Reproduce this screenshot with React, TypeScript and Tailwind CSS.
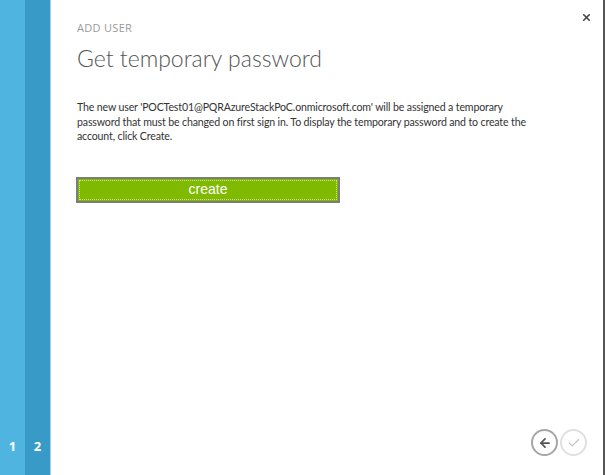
import {X, ArrowLeft, Check} from "lucide-react";

export default function App() {
    return (
        <div className="flex w-[605px] h-[475px] bg-white font-['Lato',sans-serif] overflow-hidden">
            {/* step rail */}
            <div className="flex h-full">
                <div className="w-[25px] h-full bg-[#4fb5e0] flex flex-col justify-end items-center pb-[22px]">
                    <span className="text-white font-bold text-[13px] leading-none font-['Open_Sans',sans-serif]">1</span>
                </div>
                <div className="w-[25px] h-full bg-[#389ac6] flex flex-col justify-end items-center pb-[22px]">
                    <span className="text-white font-bold text-[13px] leading-none font-['Open_Sans',sans-serif]">2</span>
                </div>
                <div className="w-[1px] h-full bg-[#9ed2ec]"></div>
            </div>

            {/* main panel */}
            <div className="flex-1 flex flex-col h-full border-r-2 border-[#555]">
                <div className="flex justify-end pt-[12px] pr-[11px]">
                    <X size={11} strokeWidth={3.5} className="text-[#444]" />
                </div>
                <div className="pl-[26px] flex flex-col">
                    <div className="text-[11px] text-[#9a9a9a] leading-none tracking-[0.3px] mt-[-1px] font-['Open_Sans',sans-serif]">ADD USER</div>
                    <h1 className="text-[23px] font-light text-[#555] leading-none mt-[14px]">
                        Get temporary password
                    </h1>
                    <p className="text-[10.6px] text-[#333] leading-[14.5px] mt-[30px] tracking-[-0.15px]">
                        The new user 'POCTest01@PQRAzureStackPoC.onmicrosoft.com' will be assigned a temporary<br/>
                        password that must be changed on first sign in. To display the temporary password and to create the<br/>
                        account, click Create.
                    </p>
                    <button className="mt-[33px] ml-[-1px] w-[264px] h-[26px] bg-[#7fba00] border-2 border-[#7c7c7c] text-white text-[14px] font-['Liberation_Sans',sans-serif] outline outline-1 outline-dotted outline-[#c8e68a] outline-offset-[-4px] flex items-center justify-center">
                        create
                    </button>
                </div>
                <div className="flex-1"></div>
                <div className="flex justify-end gap-[2px] pr-[16px] pb-[19px]">
                    <div className="w-[27px] h-[27px] rounded-full border-2 border-[#a6a6a6] flex items-center justify-center">
                        <ArrowLeft size={14} strokeWidth={3} className="text-[#555]" />
                    </div>
                    <div className="w-[27px] h-[27px] rounded-full border-2 border-[#e0e0e0] flex items-center justify-center">
                        <Check size={14} strokeWidth={2} className="text-[#c4c4c4]" />
                    </div>
                </div>
            </div>
        </div>
    );
}
